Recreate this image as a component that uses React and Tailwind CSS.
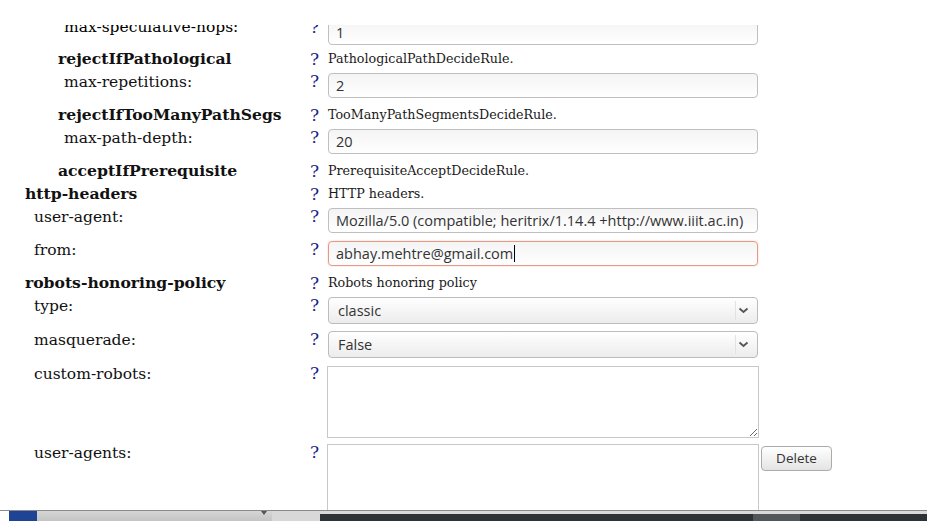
import React from "react";

const serif = { fontFamily: '"DejaVu Serif", serif' };

const Help = () => (
  <div className="w-[20px] shrink-0 pl-[2px] text-[17px] leading-[20px] text-[#1e1e88]" style={serif}>
    ?
  </div>
);

// heading row: bold section name + short description
const Heading = ({ indent, name, desc }) => (
  <div className="flex h-[23px] items-center">
    <div className={`w-[308px] shrink-0 text-[15.6px] font-bold text-[#111] ${indent}`} style={serif}>
      {name}
    </div>
    <Help />
    <div className="text-[12.7px] text-[#1a1a1a]" style={serif}>
      {desc}
    </div>
  </div>
);

// field row: plain label + a control
const Field = ({ indent, label, h, children }) => (
  <div className={`flex items-start ${h}`}>
    <div className={`w-[308px] shrink-0 pt-[2px] text-[15.5px] leading-[20px] text-[#111] ${indent}`} style={serif}>
      {label}
    </div>
    <div className="pt-[1px]">
      <Help />
    </div>
    <div className="flex items-start pt-[3px]">{children}</div>
  </div>
);

const TextBox = ({ value, focus, caret }) => (
  <div
    className={`flex h-[25px] w-[430px] items-center overflow-hidden whitespace-nowrap rounded-[4px] border bg-linear-to-b from-[#f4f4f4] to-white px-[7px] text-[14.5px] text-[#333] ${
      focus ? "border-[#e39a86] shadow-[0_0_2px_#f3c7bb]" : "border-[#bfbfbf]"
    }`}
    style={{ fontFamily: '"Open Sans", sans-serif' }}
  >
    <span>{value}</span>
    {caret && <span className="ml-[1px] inline-block h-[17px] w-[1px] shrink-0 bg-black" />}
  </div>
);

const Select = ({ value }) => (
  <div
    className="relative flex h-[27px] w-[430px] items-center rounded-[4px] border border-[#bcbcbc] bg-linear-to-b from-white to-[#ececec] pl-[9px] text-[14.5px] text-[#333]"
    style={{ fontFamily: '"Open Sans", sans-serif' }}
  >
    {value}
    <div className="absolute top-[3px] right-[21px] h-[19px] w-[1px] bg-[#e2e2e2]" />
    <svg className="absolute right-[8px] top-[9px]" width="11" height="7" viewBox="0 0 11 7">
      <path d="M1.5 1.5 L5.5 5 L9.5 1.5" fill="none" stroke="#555" strokeWidth="1.8" />
    </svg>
  </div>
);

export default function App() {
  return (
    <div className="flex h-[521px] w-[927px] flex-col overflow-hidden bg-white">
      <div className="h-[25px] shrink-0 bg-white" />

      <div className="flex-1 overflow-hidden">
        <div className="-mt-[8px]">
          <div className="flex h-[30px] items-start">
            <div className="w-[308px] shrink-0 pl-[64px] text-[15.5px] leading-[20px]" style={serif}>
              max-speculative-hops:
            </div>
            <div>
              <Help />
            </div>
            <div className="pt-[3px]">
              <TextBox value="1" />
            </div>
          </div>

          <Heading indent="pl-[58px]" name="rejectIfPathological" desc="PathologicalPathDecideRule." />
          <Field indent="pl-[64px]" label="max-repetitions:" h="h-[33px]">
            <TextBox value="2" />
          </Field>

          <Heading indent="pl-[58px]" name="rejectIfTooManyPathSegs" desc="TooManyPathSegmentsDecideRule." />
          <Field indent="pl-[64px]" label="max-path-depth:" h="h-[33px]">
            <TextBox value="20" />
          </Field>

          <Heading indent="pl-[58px]" name="acceptIfPrerequisite" desc="PrerequisiteAcceptDecideRule." />
          <Heading indent="pl-[25px]" name="http-headers" desc="HTTP headers." />
          <Field indent="pl-[34px]" label="user-agent:" h="h-[33px]">
            <TextBox value="Mozilla/5.0 (compatible; heritrix/1.14.4 +http://www.iiit.ac.in)" />
          </Field>
          <Field indent="pl-[34px]" label="from:" h="h-[33px]">
            <TextBox value="abhay.mehtre@gmail.com" focus caret />
          </Field>

          <Heading indent="pl-[25px]" name="robots-honoring-policy" desc="Robots honoring policy" />
          <Field indent="pl-[34px]" label="type:" h="h-[34px]">
            <Select value="classic" />
          </Field>
          <Field indent="pl-[34px]" label="masquerade:" h="h-[34px]">
            <Select value="False" />
          </Field>
          <Field indent="pl-[34px]" label="custom-robots:" h="h-[79px]">
            <textarea className="-ml-[1px] mt-[1px] h-[72px] w-[432px] border border-[#c8c8c8] bg-white" />
          </Field>
          <Field indent="pl-[34px]" label="user-agents:" h="h-[80px]">
            <div className="-ml-[1px] h-[72px] w-[432px] border border-[#c8c8c8] bg-white" />
            <button
              className="ml-[2px] mt-[2px] h-[25px] w-[71px] rounded-[4px] border border-[#ababab] bg-linear-to-b from-white to-[#e4e4e4] text-[13.5px] text-[#333]"
              style={{ fontFamily: '"Open Sans", sans-serif' }}
            >
              Delete
            </button>
          </Field>
        </div>
      </div>

      {/* bottom bar */}
      <div className="h-[11px] shrink-0 border-t border-[#8a8a8a]">
        <div className="flex h-full">
          <div className="w-[9px] bg-white" />
          <div className="w-[28px] bg-[#1f4496]" />
          <div className="relative w-[235px] bg-linear-to-b from-[#d6d6d6] to-[#c4c4c4]">
            <svg className="absolute right-[4px] top-[0px]" width="8" height="5" viewBox="0 0 8 5">
              <path d="M1 0 L4 4 L7 0 Z" fill="#555" />
            </svg>
          </div>
          <div className="w-[48px] bg-[#d8d8d8]" />
          <div className="flex flex-1 flex-col">
            <div className="h-[3px] bg-[#d8d8d8]" />
            <div className="flex flex-1 bg-[#2c3235]">
              <div className="w-[433px]" />
              <div className="w-[47px] bg-[#50565a]" />
            </div>
          </div>
        </div>
      </div>
    </div>
  );
}
